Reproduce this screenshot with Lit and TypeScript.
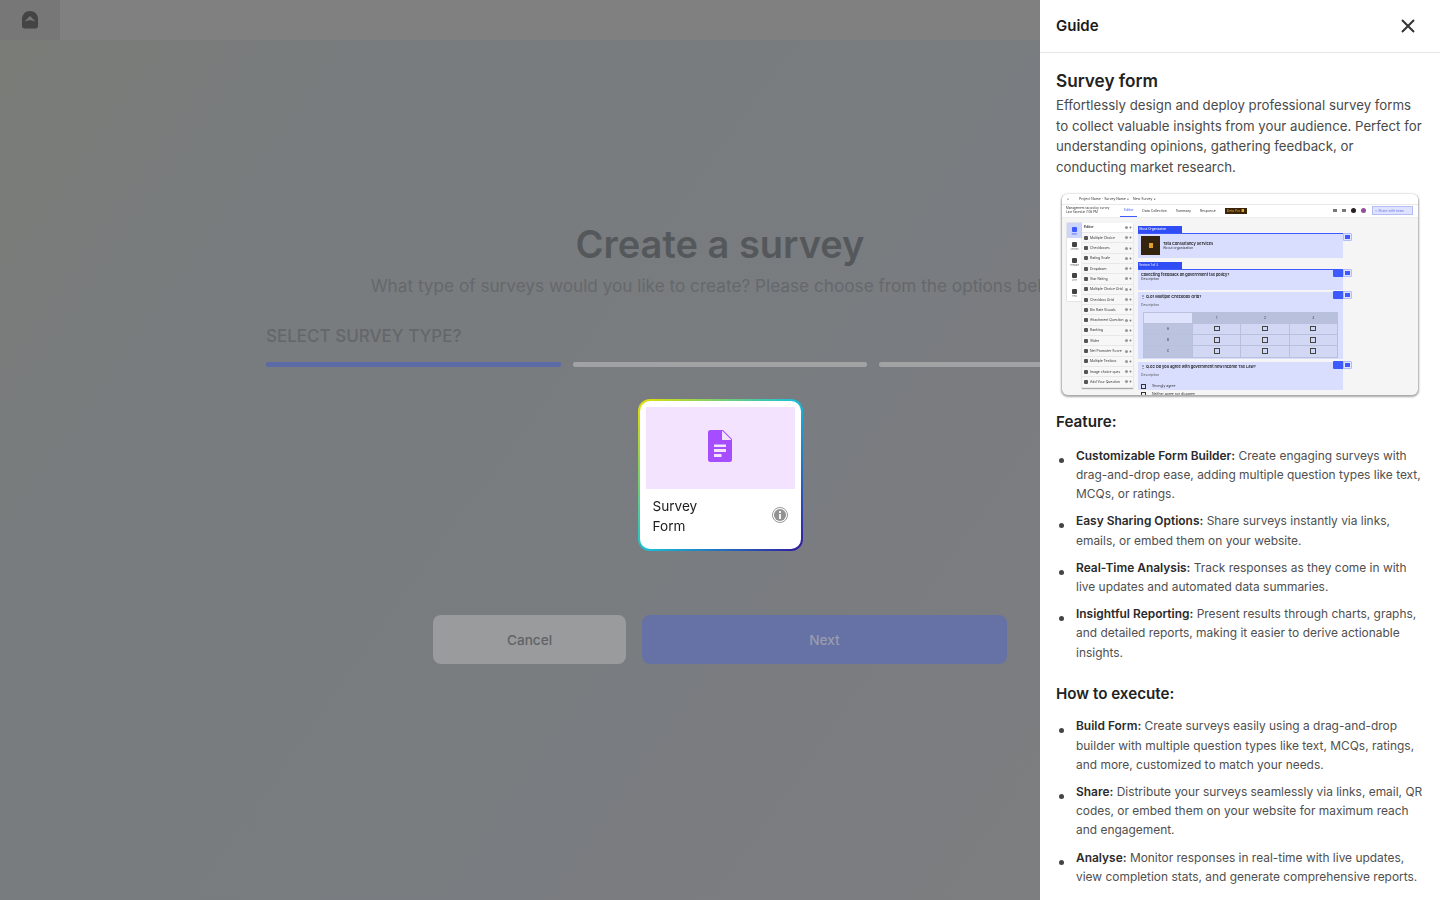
import { LitElement, html, css, svg } from 'lit';
import { customElement } from 'lit/decorators.js';

const features = [
  ['Customizable Form Builder:', 'Create engaging surveys with drag-and-drop ease, adding multiple question types like text, MCQs, or ratings.'],
  ['Easy Sharing Options:', 'Share surveys instantly via links, emails, or embed them on your website.'],
  ['Real-Time Analysis:', 'Track responses as they come in with live updates and automated data summaries.'],
  ['Insightful Reporting:', 'Present results through charts, graphs, and detailed reports, making it easier to derive actionable insights.'],
];

const steps = [
  ['Build Form:', 'Create surveys easily using a drag-and-drop builder with multiple question types like text, MCQs, ratings, and more, customized to match your needs.'],
  ['Share:', 'Distribute your surveys seamlessly via links, email, QR codes, or embed them on your website for maximum reach and engagement.'],
  ['Analyse:', 'Monitor responses in real-time with live updates, view completion stats, and generate comprehensive reports.'],
];

const tools = ['Multiple Choice', 'Checkboxes', 'Rating Scale', 'Dropdown', 'Star Rating', 'Multiple Choice Grid', 'Checkbox Grid', 'Bin Rate Visuals', 'Attachment Question', 'Ranking', 'Slider', 'Net Promoter Score', 'Multiple Textbox', 'Image choice ques', 'Add Your Question'];

@customElement('survey-preview')
class SurveyPreview extends LitElement {
  static styles = css`
    :host {
      display: block;
      width: 356px;
      height: 201px;
      margin: 0 auto;
      overflow: hidden;
      border-radius: 6px;
      background: #f5f5f5;
      box-shadow: 0 1px 2px 1px #a8a8a8;
      font-family: Inter, sans-serif;
      font-size: 3.4px;
      color: #333;
      filter: blur(0.5px);
    }
    .tabs { height: 10px; display: flex; align-items: center; padding-left: 5px; background: #fff; border-bottom: 1px solid #e8e8e8; white-space: nowrap; }
    .tabs span:nth-child(2) { width: 48px; margin-left: 10px; }
    .tabs span:nth-child(3) { width: 28px; margin-left: 6px; }
    .top { height: 12px; display: flex; align-items: center; padding: 0 5px 0 4px; background: #fff; border-bottom: 1px solid #eee; white-space: nowrap; }
    .top .t { width: 54px; line-height: 3.6px; font-size: 3px; }
    .top .on { color: #3d5afe; border-bottom: 1px solid #3d5afe; padding: 4px 4px; }
    .top .data { margin-left: 5px; }
    .top .sum { margin-left: 9px; }
    .top .resp { margin-left: 9px; }
    .badge { margin-left: 9px; width: 22px; background: #3a2408; color: #e0a030; padding: 1px 0 1px 2px; box-sizing: border-box; }
    .dots { margin-left: auto; margin-right: 6px; display: flex; gap: 5px; align-items: center; }
    .dots i { width: 4px; height: 3px; background: #777; }
    .dots i:nth-child(3) { width: 5px; height: 5px; border-radius: 50%; background: #2a2020; }
    .dots i:nth-child(4) { width: 5px; height: 5px; border-radius: 50%; background: #93509a; }
    .share { width: 41px; box-sizing: border-box; border: 0.5px solid #b5bdf8; background: #dfe3ff; color: #6a7ae8; padding: 1.5px 2px; white-space: nowrap; }
    .body { display: flex; height: 177px; padding-top: 5px; box-sizing: border-box; }
    .rail { width: 15px; height: 78px; margin-left: 5px; background: #fff; box-shadow: 0 0 1px #999; display: flex; flex-direction: column; }
    .rail div { height: 15.6px; display: flex; flex-direction: column; align-items: center; justify-content: center; font-size: 2px; color: #666; }
    .rail div:first-child { background: #cdd5fb; color: #3d5afe; }
    .rail b { width: 5px; height: 5px; background: #444; margin-bottom: 1px; border-radius: 1px; }
    .rail div:first-child b { background: #3d5afe; }
    .tools { width: 51px; height: 165px; background: #fff; box-shadow: 0 1px 1px #aaa; flex: none; }
    .tools div { height: 10.3px; box-sizing: border-box; display: flex; align-items: center; padding: 0 1px 0 2px; border-bottom: 0.5px solid #e8e8e8; background: #f7f7f7; white-space: nowrap; overflow: hidden; }
    .tools div:first-child { background: #fff; font-weight: 600; }
    .tools i { flex: none; width: 4px; height: 4px; margin-right: 2px; background: #555; border-radius: 1px; }
    .tools div:first-child i { display: none; }
    .tools s { flex: none; margin-left: auto; width: 3px; height: 3px; border-radius: 50%; background: #999; box-shadow: 4px 0 0 -0.6px #777; margin-right: 4px; }
    .form { width: 205px; margin-left: 5px; flex: none; padding-top: 3px; }
    .tag { width: 44px; height: 7px; background: #2f4cf5; color: #fff; padding-left: 1px; line-height: 7px; font-size: 3px; box-sizing: border-box; }
    .sec { background: #d9deff; border-top: 1px solid #3d5afe; box-sizing: border-box; padding: 2px 3px; }
    .s1 { height: 25px; display: flex; gap: 3px; align-items: center; margin-bottom: 4px; }
    .logo { width: 19px; height: 19px; background: #33230f; display: flex; align-items: center; justify-content: center; }
    .logo i { width: 4px; height: 5px; background: #e0a030; }
    .s2 { height: 21px; margin-bottom: 2px; }
    .s3 { height: 67px; border: 0; margin-bottom: 3px; }
    .s4 { height: 28px; border: 0; }
    .q { font-weight: 600; font-size: 3.9px; color: #222; white-space: nowrap; }
    .d { margin-top: 4px; color: #555; }
    table { border-collapse: collapse; width: 195px; margin: 5px 0 0 2px; table-layout: fixed; }
    td { height: 10.2px; border: 0.5px solid #b9c0de; background: #d2d8f3; text-align: center; padding: 0; }
    tr:first-child td { background: #b9c0dc; }
    tr:first-child td:first-child { background: #dfe3fb; }
    td:first-child { background: #bcc3df; width: 48px; }
    td u { display: inline-block; width: 4px; height: 3.5px; border: 0.6px solid #444; }
    .opt { display: flex; align-items: center; gap: 6px; margin-top: 7px; white-space: nowrap; }
    .opt u { width: 3px; height: 3px; border: 0.6px solid #333; }
    .after { padding: 2px 3px; }
    .after .opt { margin-top: 0; }
    .btns { width: 0; position: relative; flex: none; }
    .btn { position: absolute; left: -10px; display: flex; }
    .btn i { width: 10px; height: 8px; background: #3d5afe; border-radius: 1px 0 0 1px; }
    .btn em { width: 10px; }
    .btn b { width: 9px; height: 8px; background: #dfe3ff; border: 0.5px solid #b5bdf8; box-sizing: border-box; display: flex; align-items: center; justify-content: center; border-radius: 0 1px 1px 0; }
    .btn b::after { content: ''; width: 4.5px; height: 3.5px; background: #3d5afe; }
  `;

  render() {
    return html`
      <div class="tabs"><span>⌂</span><span>Project Name - Survey Name ×</span><span>New Survey ×</span></div>
      <div class="top">
        <span class="t">Management tax policy survey<br />Last Saved at 7:08 PM</span>
        <span class="on">Editor</span><span class="data">Data Collection</span><span class="sum">Summary</span><span class="resp">Response</span>
        <span class="badge">Beta Pro ■</span>
        <span class="dots"><i></i><i></i><i></i><i></i></span>
        <span class="share">&lt; Share with team</span>
      </div>
      <div class="body">
        <div class="rail">
          <div><b></b>Editor</div><div><b></b>Sections</div><div><b></b>Template</div><div><b></b>Style</div><div><b></b>Field</div>
        </div>
        <div class="tools">
          <div>Editor<s></s></div>
          ${tools.map((t) => html`<div><i></i>${t}<s></s></div>`)}
        </div>
        <div class="form">
          <div class="tag">About Organization</div>
          <div class="sec s1"><span class="logo"><i></i></span><span><span class="q">Tata Consultancy Services</span><br />About organization</span></div>
          <div class="tag">Section 1 of 3</div>
          <div class="sec s2"><div class="q">Collecting feedback on government tax policy?</div><div>Description</div></div>
          <div class="sec s3">
            <div class="q">⋮ Q.01 Multiple Checkbox Grid?</div>
            <div class="d">Description</div>
            <table>
              <tr><td></td><td>1</td><td>2</td><td>3</td></tr>
              ${['A', 'B', 'C'].map((r) => html`<tr><td>${r}</td><td><u></u></td><td><u></u></td><td><u></u></td></tr>`)}
            </table>
          </div>
          <div class="sec s4">
            <div class="q">⋮ Q.02 Do you agree with government new Income Tax Law?</div>
            <div class="d">Description</div>
            <div class="opt"><u></u>Strongly agree</div>
          </div>
          <div class="after"><div class="opt"><u></u>Neither agree nor disagree</div></div>
        </div>
        <div class="btns">
          <div class="btn" style="top:10px"><em></em><b></b></div>
          <div class="btn" style="top:46px"><i></i><b></b></div>
          <div class="btn" style="top:68px"><i></i><b></b></div>
          <div class="btn" style="top:138px"><i></i><b></b></div>
        </div>
      </div>
    `;
  }
}

@customElement('app-root')
class AppRoot extends LitElement {
  static styles = css`
    :host {
      display: block;
      position: relative;
      width: 100%;
      height: 100vh;
      overflow: hidden;
      font-family: Inter, 'Liberation Sans', sans-serif;
      background: linear-gradient(125deg, #7b7c77 0%, #787c7e 20%, #797c80 55%, #7e7e7f 85%);
    }
    .bar { height: 40px; background: #808080; }
    .home { width: 60px; height: 40px; background: #777; display: flex; align-items: center; justify-content: center; }
    .main { display: flex; flex-direction: column; align-items: center; }
    h1 { margin: 179px 0 0; font-size: 38px; line-height: 50px; font-weight: 600; color: #55585b; }
    .sub { margin-top: 5px; font-size: 17.2px; line-height: 24px; color: #65686b; white-space: nowrap; }
    .wizard { width: 908px; margin-top: 26px; }
    .label { font-size: 17px; line-height: 24px; font-weight: 500; color: #64676a; }
    .progress { display: grid; grid-template-columns: repeat(3, 1fr); gap: 12px; margin-top: 14px; }
    .progress span { height: 5px; border-radius: 2px; background: #a0a2a3; }
    .progress span:first-child { background: #5c6aa5; }
    .card {
      position: relative;
      z-index: 2;
      box-sizing: border-box;
      width: 165px;
      height: 152px;
      margin-top: 32px;
      padding: 8px;
      border: 2px solid transparent;
      border-radius: 12px;
      background: linear-gradient(#fff, #fff) padding-box,
        linear-gradient(135deg, #e6e000 0%, #18c0d8 50%, #3217a0 100%) border-box;
    }
    .thumb { height: 82px; box-sizing: border-box; padding-bottom: 4px; background: #f3e3ff; display: flex; align-items: center; justify-content: center; margin: -2px -2px 0; }
    .info { display: flex; align-items: center; justify-content: space-between; padding: 7px 7px 0 7px; margin: 0 -2px; }
    .info svg { margin-top: -3px; }
    .name { width: 60px; font-size: 13.6px; line-height: 20px; color: #1c1c1c; }
    .actions { display: flex; gap: 16px; margin-top: 64px; }
    button { border: 0; height: 49px; border-radius: 8px; font: 500 13.6px Inter, sans-serif; }
    .cancel { width: 193px; background: #9a9b9c; color: #606366; }
    .next { width: 365px; background: #6672a5; color: #9a9cae; }
    .veil { position: absolute; inset: 0; z-index: 1; backdrop-filter: blur(0.6px); }
    .drawer {
      position: absolute;
      z-index: 3;
      top: 0;
      right: 0;
      bottom: 0;
      width: 400px;
      background: #fff;
      overflow: hidden;
    }
    .head { height: 52px; box-sizing: content-box; border-bottom: 1px solid #e5e5e5; display: flex; align-items: center; justify-content: space-between; padding: 0 24px 0 16px; font-size: 15px; font-weight: 600; color: #1a1a1a; }
    .head span { margin-bottom: 2px; }
    .head svg { display: block; }
    .content { padding: 17px 16px 0; }
    h2 { margin: 0; font-size: 17.2px; line-height: 22px; font-weight: 600; color: #222; }
    .intro { margin: 3px 0 0; font-size: 13.25px; line-height: 20.7px; color: #4a4a4a; }
    survey-preview { margin-top: 16px; }
    h3 { margin: 0; font-size: 15.2px; line-height: 22px; font-weight: 600; color: #222; }
    .features { margin-top: 16px; }
    ul { list-style: none; margin: 13px 0 0; padding: 0; display: flex; flex-direction: column; gap: 8px; }
    li { position: relative; padding-left: 20px; font-size: 11.95px; line-height: 19.2px; color: #505050; }
    li::before { content: ''; position: absolute; left: 2.5px; top: 12px; width: 5px; height: 5px; border-radius: 50%; background: #444; }
    li b { font-weight: 600; color: #2a2a2a; }
    .how { margin-top: 21px; }
    .how + ul { margin-top: 11.5px; }
  `;

  render() {
    return html`
      <div class="bar">
        <div class="home">
          <svg width="20" height="20" viewBox="0 0 20 20" fill="#444">
            <path d="M10 1 C5.5 1 2 4.5 2 9 V16 C2 17.5 3 18.5 4.5 18.5 H15.5 C17 18.5 18 17.5 18 16 V9 C18 4.5 14.5 1 10 1 Z" />
            <path d="M10 6 L15.5 11.5 L10 10 L4.5 11.5 Z" fill="#777" />
          </svg>
        </div>
      </div>
      <div class="main">
        <h1>Create a survey</h1>
        <div class="sub">What type of surveys would you like to create? Please choose from the options below.</div>
        <div class="wizard">
          <div class="label">SELECT SURVEY TYPE?</div>
          <div class="progress"><span></span><span></span><span></span></div>
        </div>
        <div class="card">
          <div class="thumb">
            <svg width="24" height="32" viewBox="0 0 24 32">
              <path d="M2.5 0 H15 L24 9 V29.5 A2.5 2.5 0 0 1 21.5 32 H2.5 A2.5 2.5 0 0 1 0 29.5 V2.5 A2.5 2.5 0 0 1 2.5 0 Z" fill="#a64dff" />
              <path d="M14 0.5 L23.5 10 H14 Z" fill="#f3e3ff" />
              <path d="M6 14.5 H18 V17 H6 Z M6 19 H18 V22 H6 Z M6 24 H13.5 V27 H6 Z" fill="#f3e3ff" />
            </svg>
          </div>
          <div class="info">
            <div class="name">Survey Form</div>
            <svg width="16" height="16" viewBox="0 0 16 16">
              <circle cx="8" cy="8" r="7.5" fill="#fff" stroke="#9a9a9a" />
              <circle cx="8" cy="8" r="6" fill="#929292" />
              <rect x="7" y="7" width="2" height="5" fill="#f2f2f2" />
              <rect x="7" y="4" width="2" height="2" fill="#f2f2f2" />
            </svg>
          </div>
        </div>
        <div class="actions">
          <button class="cancel">Cancel</button>
          <button class="next">Next</button>
        </div>
      </div>
      <div class="veil"></div>
      <aside class="drawer">
        <div class="head">
          <span>Guide</span>
          <svg width="16" height="16" viewBox="0 0 16 16" fill="none" stroke="#333" stroke-width="2">
            ${svg`<path d="M2 2 L14 14 M14 2 L2 14" />`}
          </svg>
        </div>
        <div class="content">
          <h2>Survey form</h2>
          <p class="intro">Effortlessly design and deploy professional survey forms to collect valuable insights from your audience. Perfect for understanding opinions, gathering feedback, or conducting market research.</p>
          <survey-preview></survey-preview>
          <h3 class="features">Feature:</h3>
          <ul>${features.map(([k, v]) => html`<li><b>${k}</b> ${v}</li>`)}</ul>
          <h3 class="how">How to execute:</h3>
          <ul>${steps.map(([k, v]) => html`<li><b>${k}</b> ${v}</li>`)}</ul>
        </div>
      </aside>
    `;
  }
}
